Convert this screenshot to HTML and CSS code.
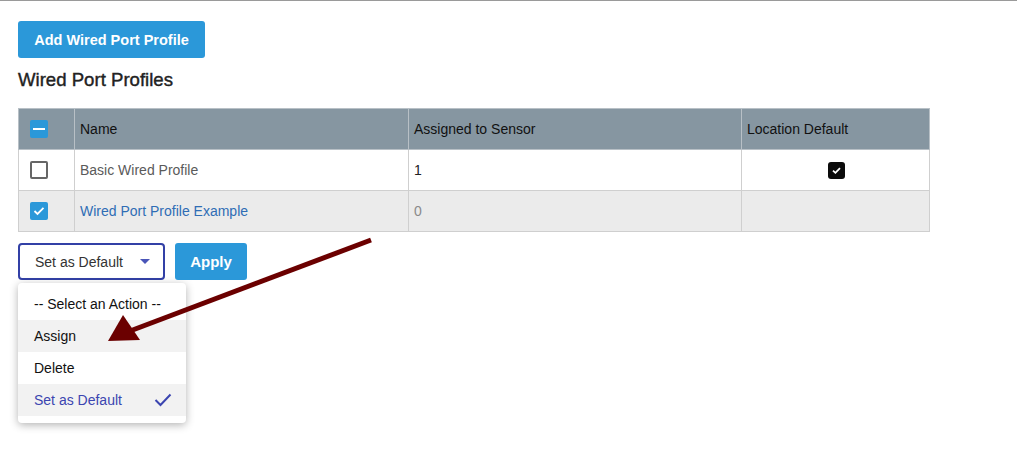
FILE: index.html
```html
<!DOCTYPE html>
<html lang="en">
<head>
  <meta charset="UTF-8">
  <meta name="viewport" content="width=device-width, initial-scale=1">
  <title>Wired Port Profiles</title>
  <link rel="stylesheet" href="styles.css">
</head>
<body>

  <div class="page">
    <button class="btn-primary add-btn">Add Wired Port Profile</button>
    <h2 class="section-title">Wired Port Profiles</h2>

    <table class="profiles">
      <thead>
        <tr>
          <th class="col-check"><span class="cb cb-partial"></span></th>
          <th class="col-name">Name</th>
          <th class="col-assigned">Assigned to Sensor</th>
          <th class="col-default">Location Default</th>
        </tr>
      </thead>
      <tbody>
        <tr>
          <td class="col-check"><span class="cb"></span></td>
          <td class="muted">Basic Wired Profile</td>
          <td>1</td>
          <td class="center"><span class="cb-dark">
            <svg width="9" height="7" viewBox="0 0 9 7"><path d="M1 3.6 L3.4 5.8 L8 1.2" fill="none" stroke="#fff" stroke-width="1.8"/></svg>
          </span></td>
        </tr>
        <tr class="selected">
          <td class="col-check"><span class="cb cb-on">
            <svg width="12" height="10" viewBox="0 0 12 10"><path d="M1.5 5 L4.5 8 L10.5 1.8" fill="none" stroke="#fff" stroke-width="1.8"/></svg>
          </span></td>
          <td><a class="profile-link" href="#">Wired Port Profile Example</a></td>
          <td class="faint">0</td>
          <td></td>
        </tr>
      </tbody>
    </table>

    <div class="actions">
      <div class="select-wrap">
        <div class="select-box">
          <span>Set as Default</span>
          <span class="caret"></span>
        </div>
        <div class="action-list">
          <div class="action-item">-- Select an Action --</div>
          <div class="action-item hover">Assign</div>
          <div class="action-item">Delete</div>
          <div class="action-item chosen">Set as Default
            <svg width="18" height="14" viewBox="0 0 18 14"><path d="M1.5 7 L6.5 12 L16.5 1.5" fill="none" stroke="#3b45b0" stroke-width="2"/></svg>
          </div>
        </div>
      </div>
      <button class="btn-primary apply-btn">Apply</button>
    </div>
  </div>

  <!-- annotation arrow -->
  <svg class="annotation" width="1017" height="461" viewBox="0 0 1017 461">
    <line x1="371" y1="240" x2="130" y2="331" stroke="#6b0000" stroke-width="5"/>
    <polygon points="108,341 123,315 140,340" fill="#6b0000"/>
  </svg>

</body>
</html>
```

FILE: styles.css
```css
body {
  margin: 0;
  font-family: "Liberation Sans", Arial, sans-serif;
  font-size: 14px;
  color: #222;
  background: #fff;
  border-top: 1px solid #9a9a9a;
}

.page {
  padding: 20px 18px 38px 18px;
}

.btn-primary {
  background-color: #2b98d9;
  color: #fff;
  border: none;
  border-radius: 3px;
  font-family: "Liberation Sans", Arial, sans-serif;
  font-weight: bold;
  cursor: pointer;
}

.add-btn {
  display: block;
  width: 187px;
  height: 37px;
  font-size: 14.5px;
}

.section-title {
  margin: 11px 0 17px 0;
  font-size: 18.6px;
  line-height: 22px;
  font-weight: normal;
  -webkit-text-stroke: 0.4px #222;
  color: #222;
}

/* table */
.profiles {
  width: 912px;
  border-collapse: collapse;
  border: 1px solid #c9c9c9;
}

.profiles th,
.profiles td {
  height: 40px;
  padding: 0 5px;
  border: 1px solid #cfcfcf;
  text-align: left;
  font-size: 14px;
  font-weight: normal;
}

.profiles th {
  background-color: #8696a1;
  color: #111;
  border-color: #b8c0c6;
}

.profiles td {
  color: #222;
}

.col-check { width: 39px; padding-left: 11px !important; }
.col-name { width: 323px; }
.col-assigned { width: 322px; }

.profiles tr.selected td {
  background-color: #ebebeb;
}

.muted { color: #5a5a5a !important; }
.faint { color: #8a8a8a !important; }
.center { text-align: center !important; }

.profile-link {
  color: #2f6db5;
  text-decoration: none;
}

/* checkboxes */
.cb {
  display: inline-flex;
  align-items: center;
  justify-content: center;
  box-sizing: border-box;
  width: 18px;
  height: 18px;
  border: 2px solid #666;
  border-radius: 2px;
  background: #fff;
  vertical-align: middle;
}

.cb-on,
.cb-partial {
  border: none;
  background-color: #2b98d9;
}

.cb-partial::after {
  content: "";
  width: 12px;
  height: 2px;
  background: #fff;
}

.cb-dark {
  display: inline-flex;
  align-items: center;
  justify-content: center;
  width: 17px;
  height: 17px;
  margin-left: 2px;
  border-radius: 3px;
  background: #0b0b0b;
  vertical-align: middle;
}

/* actions */
.actions {
  display: flex;
  align-items: flex-start;
  gap: 10px;
  margin-top: 11px;
}

.select-wrap {
  width: 147px;
}

.select-box {
  display: flex;
  align-items: center;
  justify-content: space-between;
  box-sizing: border-box;
  width: 147px;
  height: 37px;
  padding: 0 13px 0 15px;
  border: 2px solid #3240a6;
  border-radius: 4px;
  color: #333;
}

.caret {
  width: 0;
  height: 0;
  border-left: 5px solid transparent;
  border-right: 5px solid transparent;
  border-top: 5px solid #4a55b8;
}

/* open dropdown */
.action-list {
  width: 168px;
  margin-top: 3px;
  padding: 5px 0 7px 0;
  background: #fff;
  border-radius: 4px;
  box-shadow: 0 2px 8px rgba(0, 0, 0, 0.3);
}

.action-item {
  display: flex;
  align-items: center;
  justify-content: space-between;
  height: 32px;
  padding: 0 14px 0 16px;
  color: #111;
}

.action-item.hover {
  background-color: #f2f2f2;
}

.action-item.chosen {
  background-color: #f2f2f2;
  color: #3b45b0;
}

.apply-btn {
  width: 72px;
  height: 37px;
  font-size: 15px;
}

/* arrow drawn over the screenshot */
.annotation {
  position: absolute;
  top: 0;
  left: 0;
  pointer-events: none;
}
```
